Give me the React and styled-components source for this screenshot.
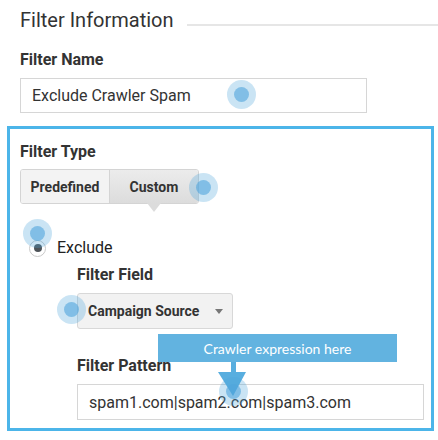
import styled, { createGlobalStyle } from "styled-components";

const GlobalStyle = createGlobalStyle`
    body{
        margin:0;
        background:#ffffff;
        font-family: Roboto, "Liberation Sans", sans-serif;
        color:#333333;
    }
`;

const spots = [
    { x: 241, y: 94 },
    { x: 203, y: 187 },
    { x: 37, y: 233 },
    { x: 71, y: 309 },
    { x: 233, y: 391 },
];

export default function App(){
    return (
        <Page>
            <GlobalStyle />
            <Header>
                <Title>Filter Information</Title>
                <Rule />
            </Header>

            <Section>
                <Label>Filter Name</Label>
                <TextInput readOnly value="Exclude Crawler Spam" />
            </Section>

            <Panel>
                <Label>Filter Type</Label>
                <Segmented>
                    <Segment>Predefined</Segment>
                    <Segment $active>Custom</Segment>
                </Segmented>

                <RadioRow>
                    <Radio />
                    <span>Exclude</span>
                </RadioRow>

                <Indent>
                    <Label>Filter Field</Label>
                    <Select>
                        <span>Campaign Source</span>
                        <Caret />
                    </Select>

                    <PatternLabel>Filter Pattern</PatternLabel>
                    <TextInput $wide readOnly value="spam1.com|spam2.com|spam3.com" />
                </Indent>

                <Callout>
                    <Bubble>Crawler expression here</Bubble>
                    <Arrow width="28" height="34" viewBox="0 0 28 34">
                        <polygon points="13,0 18,0 18,10 28,10 15,34 0,10 13,10" fill="#58aedf" />
                    </Arrow>
                </Callout>
            </Panel>

            {spots.map((s, i) => (
                <Hotspot key={i} $x={s.x} $y={s.y} />
            ))}
        </Page>
    );
}

const Page = styled.div`
    position:relative;
    width:438px;
    height:440px;
    overflow:hidden;
`;

const Header = styled.div`
    display:flex;
    margin-top:8px;
    padding-left:20px;
`;

const Title = styled.h2`
    margin:0;
    font-weight:400;
    font-size:20px;
    line-height:24px;
    color:#333333;
`;

const Rule = styled.div`
    flex:1;
    height:2px;
    margin-top:16px;
    margin-left:13px;
    background:#e6e6e6;
`;

const Section = styled.div`
    padding:18px 0 0 20px;
`;

const Label = styled.div`
    font-weight:700;
    font-size:16px;
    line-height:20px;
    color:#333333;
    margin-bottom:8px;
`;

const PatternLabel = styled(Label)`
    margin-top:27px;
    margin-bottom:8px;
`;

const TextInput = styled.input`
    display:block;
    box-sizing:border-box;
    width:${p => p.$wide ? "347px" : "347px"};
    height:${p => p.$wide ? "36px" : "35px"};
    padding:0 11px;
    border:1px solid #d6d6d6;
    border-radius:0;
    outline:none;
    font-family: Roboto, "Liberation Sans", sans-serif;
    font-size:16px;
    color:#333333;
    background:#ffffff;
`;

const Panel = styled.div`
    position:relative;
    box-sizing:border-box;
    width:427px;
    margin:13px 0 0 7px;
    padding:13px 7px 8px 10px;
    border:3px solid #4cb5e9;
`;

const Segmented = styled.div`
    display:inline-flex;
    margin-top:-1px;
    border:1px solid #d4d4d4;
    border-radius:3px;
    height:33px;
`;

const Segment = styled.div`
    position:relative;
    display:flex;
    align-items:center;
    justify-content:center;
    width:88px;
    font-weight:700;
    font-size:14px;
    color:#333333;
    background:${p => p.$active ? "linear-gradient(#ececec, #dcdcdc)" : "#f3f3f3"};
    border-left:${p => p.$active ? "1px solid #d4d4d4" : "none"};
    border-radius:${p => p.$active ? "0 2px 2px 0" : "2px 0 0 2px"};

    &::after{
        content:"";
        display:${p => p.$active ? "block" : "none"};
        position:absolute;
        left:50%;
        bottom:-9px;
        margin-left:-7px;
        border-left:7px solid transparent;
        border-right:7px solid transparent;
        border-top:9px solid #dcdcdc;
    }
`;

const RadioRow = styled.div`
    display:flex;
    align-items:center;
    gap:11px;
    margin-top:34px;
    padding-left:9px;
    height:20px;
    font-size:16px;
    line-height:20px;
    color:#222222;
`;

const Radio = styled.span`
    position:relative;
    box-sizing:border-box;
    width:17px;
    height:17px;
    border:1px solid #c9c9c9;
    border-radius:50%;
    background:#ffffff;

    &::after{
        content:"";
        position:absolute;
        left:3.5px;
        top:3.5px;
        width:8px;
        height:8px;
        border-radius:50%;
        background:#4d5358;
    }
`;

const Indent = styled.div`
    margin-left:57px;
    margin-top:7px;
`;

const Select = styled.div`
    display:flex;
    align-items:center;
    justify-content:space-between;
    box-sizing:border-box;
    width:156px;
    height:36px;
    padding:0 9px 0 10px;
    border:1px solid #d8d8d8;
    border-radius:3px;
    background:#f2f2f2;
    font-weight:700;
    font-size:14px;
    color:#333333;
`;

const Caret = styled.span`
    width:0;
    height:0;
    border-left:4.5px solid transparent;
    border-right:4.5px solid transparent;
    border-top:5px solid #777777;
`;

const Callout = styled.div`
    position:absolute;
    left:148px;
    top:205px;
    width:239px;
`;

const Bubble = styled.div`
    height:28px;
    display:flex;
    align-items:center;
    justify-content:center;
    background:#62b3e0;
    color:#ffffff;
    font-family: Lato, "Open Sans", sans-serif;
    font-size:14px;
`;

const Arrow = styled.svg`
    display:block;
    margin-left:60px;
`;

const Hotspot = styled.span`
    position:absolute;
    left:${p => p.$x - 14.5}px;
    top:${p => p.$y - 14.5}px;
    width:29px;
    height:29px;
    border-radius:50%;
    background:rgba(80,165,220,0.3);

    &::after{
        content:"";
        position:absolute;
        left:7px;
        top:7px;
        width:15px;
        height:15px;
        border-radius:50%;
        background:rgba(80,165,220,0.6);
    }
`;
